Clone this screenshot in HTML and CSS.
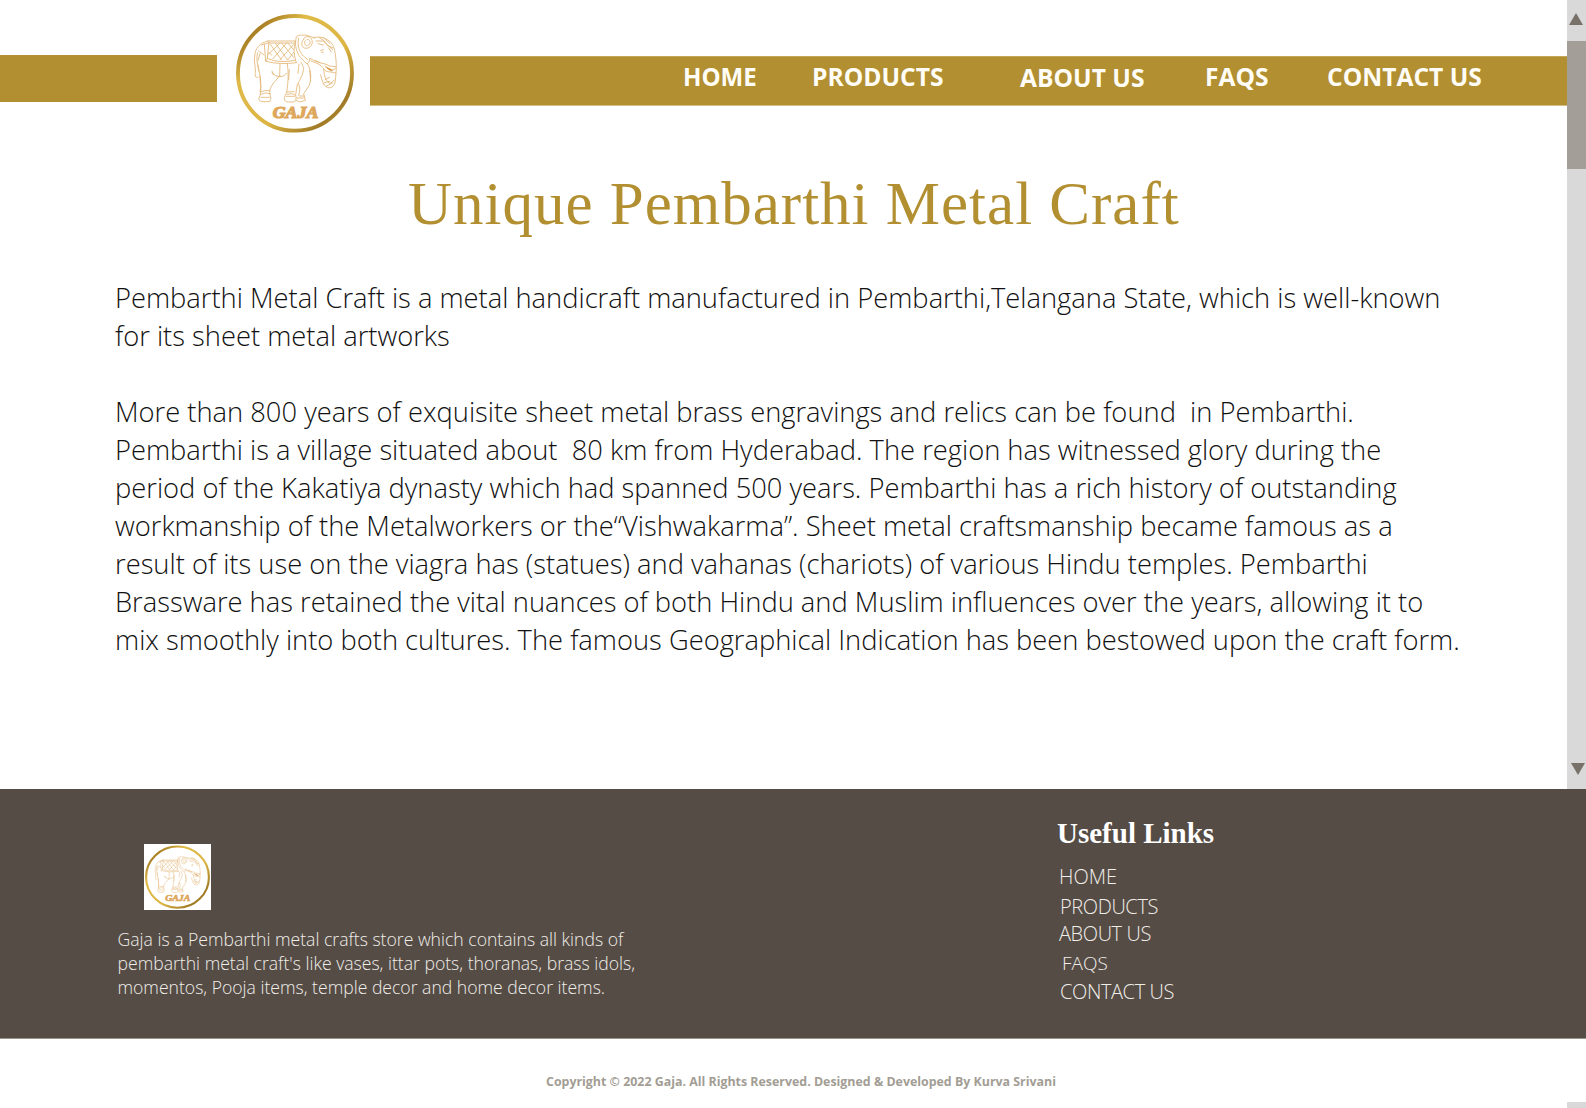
FILE: index.html
```html
<!DOCTYPE html>
<html lang="en">
<head>
<meta charset="utf-8">
<title>Gaja – Pembarthi Metal Craft</title>
<link rel="stylesheet" href="styles.css">
</head>
<body>
<svg class="defs" width="0" height="0" aria-hidden="true">
  <defs>
    <linearGradient id="ring" x1="0" y1="0" x2="1" y2="1">
      <stop offset="0" stop-color="#d9b03a"/>
      <stop offset=".14" stop-color="#a87f24"/>
      <stop offset=".3" stop-color="#e0bb48"/>
      <stop offset=".6" stop-color="#dcb544"/>
      <stop offset=".84" stop-color="#a07a26"/>
      <stop offset="1" stop-color="#e3bd45"/>
    </linearGradient>
    <symbol id="gaja" viewBox="108 40 354 360" preserveAspectRatio="none">
      <ellipse cx="285" cy="221" rx="171" ry="172" fill="#fff" stroke="url(#ring)" stroke-width="11.5"/>
      <g fill="none" stroke="#e3b777" stroke-width="2.6" stroke-linecap="round" stroke-linejoin="round">
        <path d="M204 124C180 129 164 146 164 172C161 190 168 202 166 218C163 231 170 238 174 232M172 160C167 190 178 208 180 230C184 250 183 263 180 276M204 124H287M205 130H283M184 136L204 130M176 154L192 166"/>
        <path d="M207 126L202 176Q235 192 286 182M202 176L198 185Q240 196 289 189M286 125C280 148 282 168 289 189M193 134L197 185"/>
        <path d="M211 134L244 180M226 130L263 181M245 130L281 173M263 130L281 150M240 130L204 165M260 130L218 178M280 135L240 180M281 158L263 181"/>
        <path d="M289 112C296 103 306 108 318 106L344 115M289 112C283 134 288 158 302 174Q311 184 321 193Q331 186 330 176M296 116C291 138 297 156 311 170L323 180"/>
        <path d="M311 119C298 132 308 150 324 145C341 139 341 115 325 111Q313 109 311 119M316 123C309 133 318 141 326 136C334 130 330 117 321 119"/>
        <path d="M340 114C361 108 382 116 394 130C405 142 405 160 408 181C410 201 408 230 405 248C402 266 383 270 373 256C365 245 366 235 361 225M358 114Q373 119 378 132L398 150M348 124L370 124Q381 140 399 145M370 113L390 132M362 152l8-2M370 157l-6 1M354 132l16 4"/>
        <path d="M330 176C343 185 360 190 376 193Q389 202 408 201M333 184C350 190 364 195 371 208C377 219 393 215 407 220M375 198Q391 219 406 207M377 203L398 212M371 208C373 233 379 247 390 251Q398 248 403 241M375 240l14-7M373 249l16-4M380 259l17-9"/>
        <path d="M180 229C179 250 185 261 182 277L180 288C173 299 177 306 190 306H209Q216 298 210 286L209 272C214 254 228 242 239 229M182 277Q195 270 209 273M183 284Q197 276 211 282M216 218C226 234 248 236 260 221M240 193L239 230M216 214L220 225"/>
        <path d="M262 191C267 225 264 251 260 279C251 290 249 307 265 307H281Q291 304 287 284L292 254C302 239 310 222 311 204L303 188M260 277L282 276M261 284Q276 278 286 286M323 193C335 216 334 236 328 257L311 282L316 302L299 307L289 302M296 253C301 266 300 276 296 287M299 289h13M290 295h22M183 293h25M259 290h24M329 212L332 245"/>
        <path d="M180 162l-6 20M174 196l2 18M297 193l-3 28M268 210l-2 30M345 182l15 7M386 145l8 12M207 158l8 9"/>
      </g>
      <path d="M379 201q13 4 19 14q-12-1-19-14z" fill="#d89a4b"/>
      <text x="218" y="356" class="logo-word" textLength="137" lengthAdjust="spacingAndGlyphs">GAJA</text>
    </symbol>
  </defs>
</svg>
<div class="top">
  <div class="page">
    <header class="header">
      <div class="bar-left"></div>
      <svg class="logo"><use href="#gaja"/></svg>
      <nav class="nav">
        <a class="n1">HOME</a><a class="n2">PRODUCTS</a><a class="n3">ABOUT US</a><a class="n4">FAQS</a><a class="n5">CONTACT US</a>
      </nav>
    </header>
    <main class="main">
      <h1 class="title">Unique Pembarthi Metal Craft</h1>
      <p class="text">Pembarthi Metal Craft is a metal handicraft manufactured in Pembarthi,Telangana State, which is well-known
for its sheet metal artworks</p>
      <p class="text">More than 800 years of exquisite sheet metal brass engravings and relics can be found  in Pembarthi.
Pembarthi is a village situated about  80 km from Hyderabad. The region has witnessed glory during the
period of the Kakatiya dynasty which had spanned 500 years. Pembarthi has a rich history of outstanding
workmanship of the Metalworkers or the“Vishwakarma”. Sheet metal craftsmanship became famous as a
result of its use on the viagra has (statues) and vahanas (chariots) of various Hindu temples. Pembarthi
Brassware has retained the vital nuances of both Hindu and Muslim influences over the years, allowing it to
mix smoothly into both cultures. The famous Geographical Indication has been bestowed upon the craft form.</p>
    </main>
  </div>
  <div class="scroll">
    <svg class="arrow" viewBox="0 0 14 12"><path d="M7 0L14 12H0z"/></svg>
    <div class="thumb"></div>
    <svg class="arrow down" viewBox="0 0 14 12"><path d="M0 0H14L7 12z"/></svg>
  </div>
</div>
<footer class="footer">
  <div class="about">
    <svg class="badge"><use href="#gaja"/></svg>
    <p class="blurb">Gaja is a Pembarthi metal crafts store which contains all kinds of
pembarthi metal craft's like vases, ittar pots, thoranas, brass idols,
momentos, Pooja items, temple decor and home decor items.</p>
  </div>
  <div class="links">
    <h2 class="links-title">Useful Links</h2>
    <a class="l1">HOME</a><a class="l2">PRODUCTS</a><a class="l3">ABOUT US</a><a class="l4">FAQS</a><a class="l5">CONTACT US</a>
  </div>
</footer>
<div class="bottom">
  <p class="copy">Copyright © 2022 Gaja. All Rights Reserved. Designed &amp; Developed By Kurva Srivani</p>
  <div class="track-end"></div>
</div>
</body>
</html>
```
FILE: styles.css
```css
* { box-sizing: border-box; }
body { margin: 0; width: 1586px; height: 1108px; overflow: hidden; background: #fff; font-family: "Open Sans", sans-serif; }
h1, h2, p { margin: 0; }
.defs { display: block; height: 0; }
.top { display: flex; height: 789px; }
.page { width: 1567px; }
.header { display: flex; height: 136px; }
.bar-left { width: 216.5px; height: 47px; margin-top: 55px; background: #b28f30; }
.logo { width: 118px; height: 120px; margin: 13px 16px 0 19.5px; }
.logo-word { font: italic 900 47px "Liberation Serif", serif; fill: #dda75c; stroke: #dda75c; stroke-width: 3.5px; }
.nav { display: grid; grid-template-columns: 129px 208px 185px 122px 1fr; width: 1197px; height: 50px; margin-top: 56px; padding-left: 313px; background: #b28f30; border-top: 1px solid #c4a65a; border-bottom: 1px solid #d3bd83; color: #fffdf5; font-weight: 700; font-size: 24.6px; line-height: 33px; white-space: nowrap; padding-top: 3px; }
.n1 { font-size: 24.1px; }
.n3 { padding-top: 1px; }
.main { padding: 32px 0 0 115px; }
.title { height: 111px; padding-left: 293px; font: 61px/72px "Liberation Serif", serif; letter-spacing: 1px; color: #b28f30; white-space: nowrap; }
.text { font-weight: 300; font-size: 27.32px; line-height: 38px; color: #111; white-space: pre; margin-bottom: 38px; }
.scroll { display: flex; flex-direction: column; width: 19px; background: #d9d9d9; }
.arrow { width: 14px; height: 12px; margin: 13px 0 16px 2px; fill: #78716a; flex: none; }
.thumb { height: 128px; background: #a39e97; }
.down { margin: auto 0 14px 4px; }
.footer { display: flex; height: 250px; background: #554c45; border-bottom: 1px solid #99938e; color: #f1eeea; font-weight: 300; }
.about { width: 1057px; padding: 55px 0 0 117px; }
.badge { display: block; width: 67px; height: 66px; margin-left: 27px; padding: 1px; background: #fff; }
.blurb { margin-top: 17px; padding-left: .5px; font-size: 17.6px; line-height: 24px; white-space: pre; }
.links { display: flex; flex-direction: column; font-size: 20px; line-height: 28px; white-space: nowrap; letter-spacing: -.4px; }
.links-title { margin-top: 27px; height: 47px; font: bold 29px/34px "Liberation Serif", serif; letter-spacing: 0; color: #fff; }
.l1 { margin-left: 2px; height: 30px; letter-spacing: 0; }
.l2 { margin-left: 3px; height: 27px; }
.l3 { margin-left: 2px; height: 29px; }
.l4 { margin-left: 5px; height: 29px; font-size: 19px; letter-spacing: 0; }
.l5 { margin-left: 3px; }
.bottom { display: flex; flex-direction: column; align-items: flex-end; height: 69px; }
.copy { width: 1040px; height: 63px; padding-top: 34px; font-size: 12.4px; line-height: 18px; font-weight: 700; color: #a29d94; white-space: nowrap; }
.track-end { width: 19px; height: 6px; background: #d9d9d9; }
```
